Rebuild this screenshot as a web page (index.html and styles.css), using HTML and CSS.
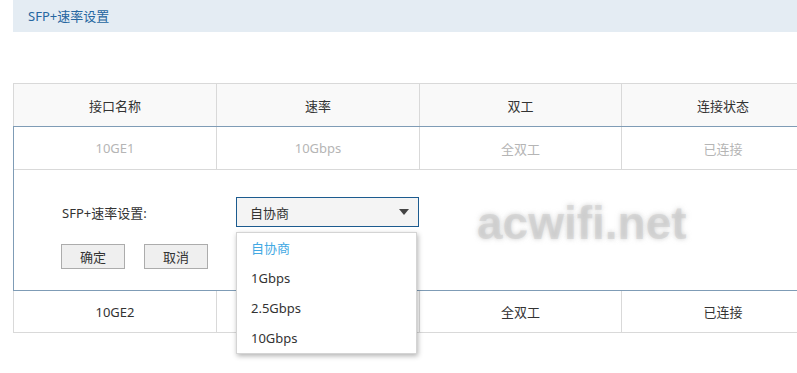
FILE: index.html
```html
<!DOCTYPE html>
<html lang="zh-CN">
<head>
    <meta charset="UTF-8">
    <title>SFP+速率设置</title>
    <link rel="stylesheet" href="styles.css">
</head>
<body>
    <div class="page">
        <div class="panel-title">SFP+速率设置</div>

        <div class="port-table">
            <div class="row head">
                <div class="cell">接口名称</div>
                <div class="cell">速率</div>
                <div class="cell">双工</div>
                <div class="cell">连接状态</div>
            </div>

            <!-- row being edited -->
            <div class="edit-group">
                <div class="row muted">
                    <div class="cell">10GE1</div>
                    <div class="cell">10Gbps</div>
                    <div class="cell">全双工</div>
                    <div class="cell">已连接</div>
                </div>
                <div class="edit-form">
                    <div class="form-line">
                        <label class="form-label">SFP+速率设置:</label>
                        <div class="select-wrap">
                            <div class="select">
                                <span>自协商</span>
                                <span class="caret"></span>
                            </div>
                            <ul class="options">
                                <li class="selected">自协商</li>
                                <li>1Gbps</li>
                                <li>2.5Gbps</li>
                                <li>10Gbps</li>
                            </ul>
                        </div>
                    </div>
                    <div class="form-buttons">
                        <button class="btn">确定</button>
                        <button class="btn">取消</button>
                    </div>
                </div>
            </div>

            <div class="row">
                <div class="cell">10GE2</div>
                <div class="cell">10Gbps</div>
                <div class="cell">全双工</div>
                <div class="cell">已连接</div>
            </div>
        </div>
    </div>

    <div class="watermark">acwifi.net</div>
</body>
</html>
```

FILE: styles.css
```css
:root {
    --line: #d9d9d9;
    --line-active: #7f9cb6;
    --text: #333333;
    --text-muted: #b5b5b5;
    --blue: #1c5b8f;
}

* {
    margin: 0;
    padding: 0;
    box-sizing: border-box;
}

html,
body {
    height: 100%;
    overflow: hidden;
}

body {
    font-family: "Noto Sans", "Noto Sans CJK SC", sans-serif;
    font-size: 13px;
    color: var(--text);
    background: #ffffff;
    position: relative;
}

.page {
    width: 825px;
    min-height: 100%;
    padding-left: 13px;
}

/* Title bar */
.panel-title {
    height: 32px;
    line-height: 32px;
    padding-left: 15px;
    background: #e4ecf3;
    color: #2666a0;
    margin-bottom: 51px;
}

/* Table */
.port-table {
    border-left: 1px solid var(--line);
    border-top: 1px solid var(--line);
}

.row {
    display: grid;
    grid-template-columns: 203px 203px 202px 203px;
    border-bottom: 1px solid var(--line);
}

.row.head {
    background: #f9f9f9;
    border-bottom: none;
}

.cell {
    height: 42px;
    display: flex;
    align-items: center;
    justify-content: center;
    border-right: 1px solid var(--line);
}

.row.muted .cell {
    color: var(--text-muted);
}

.row:last-child .cell {
    height: 41px;
}

.edit-group {
    border-top: 1px solid var(--line-active);
    border-bottom: 1px solid var(--line-active);
    border-left: 1px solid var(--line-active);
    margin-left: -1px;
}

/* Edit form */
.edit-form {
    height: 120px;
    padding: 27px 0 0 48px;
}

.form-line {
    display: flex;
    align-items: center;
}

.form-label {
    width: 174px;
}

.select-wrap {
    position: relative;
}

.select {
    width: 183px;
    height: 30px;
    border: 1px solid var(--blue);
    background: #f4f4f4;
    display: flex;
    align-items: center;
    justify-content: space-between;
    padding: 0 9px 0 13px;
}

.caret {
    width: 0;
    height: 0;
    border-left: 5px solid transparent;
    border-right: 5px solid transparent;
    border-top: 6px solid #444444;
}

.options {
    list-style: none;
    position: absolute;
    top: 35px;
    left: 0;
    width: 181px;
    background: #ffffff;
    border: 1px solid #d4d4d4;
    box-shadow: 1px 2px 5px rgba(0, 0, 0, 0.3);
    z-index: 2;
}

.options li {
    height: 30px;
    line-height: 30px;
    padding-left: 14px;
}

.options li.selected {
    color: #43a9e3;
}

.form-buttons {
    display: flex;
    gap: 19px;
    margin-top: 17px;
    margin-left: -1px;
}

.btn {
    width: 64px;
    height: 25px;
    border: 1px solid #acacac;
    background: #efefef;
    font-family: inherit;
    font-size: 13px;
    color: var(--text);
}

/* Watermark overlay */
.watermark {
    position: absolute;
    left: 477px;
    top: 196px;
    font-family: "Liberation Sans", sans-serif;
    font-weight: bold;
    font-size: 46px;
    color: rgba(200, 200, 200, 0.55);
    text-shadow: 0 0 5px rgba(170, 170, 170, 0.55);
    pointer-events: none;
    z-index: 3;
}
```
